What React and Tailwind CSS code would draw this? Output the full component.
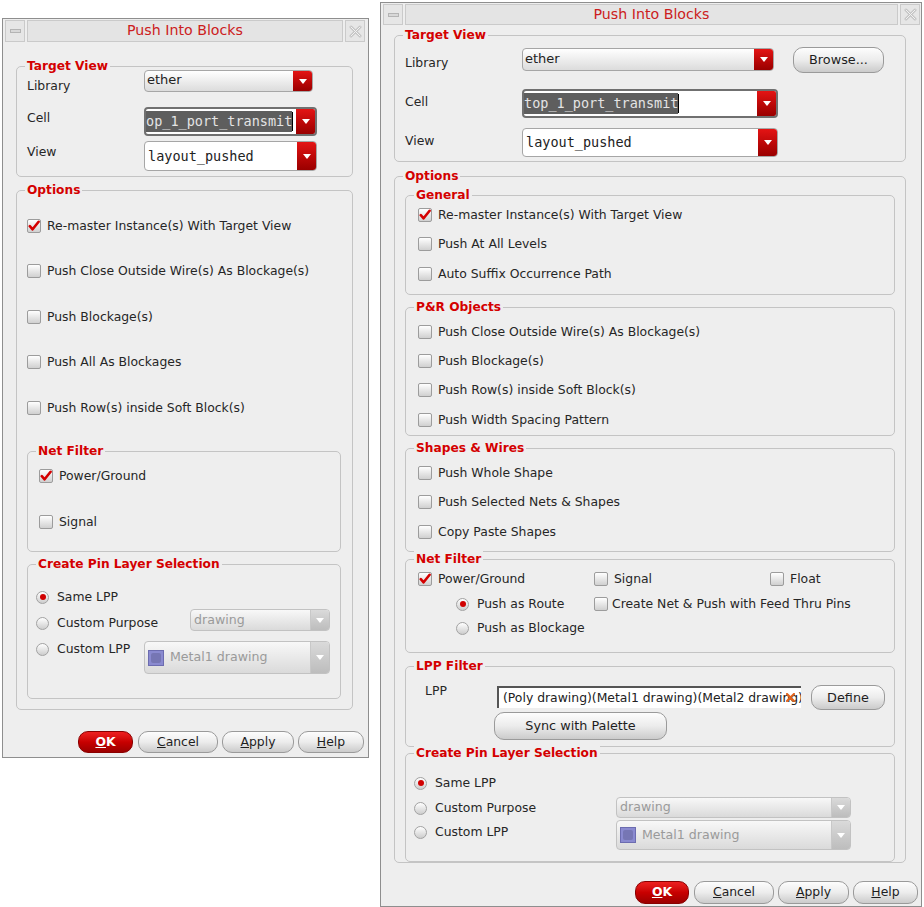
import React from 'react';

const Check = ({ checked }) => (
  <span className="w-[14px] h-[14px] shrink-0 rounded-[2px] border border-[#9c9c9c] bg-linear-to-b from-white to-[#d0d0d0] flex items-center justify-center">
    {checked && (
      <svg width="12" height="12" viewBox="0 0 12 12">
        <path d="M1.8 6.2 L4.6 9.3 L10.6 1.8" fill="none" stroke="#d40000" strokeWidth="2.6" strokeLinecap="round" strokeLinejoin="round" />
      </svg>
    )}
  </span>
);

const Radio = ({ checked }) => (
  <span className="w-[13px] h-[13px] shrink-0 rounded-full border border-[#a2a2a2] bg-linear-to-b from-white to-[#cdcdcd] flex items-center justify-center">
    {checked && <span className="w-[6px] h-[6px] rounded-full bg-[#d00000]" />}
  </span>
);

const CheckRow = ({ checked, label, className }) => (
  <div className={`flex items-center h-[20px] ${className}`}>
    <Check checked={checked} />
    <span className="ml-[6px] text-[12.4px] text-[#262626] whitespace-nowrap">{label}</span>
  </div>
);

const RadioRow = ({ checked, label, className }) => (
  <div className={`flex items-center h-[16px] ${className}`}>
    <Radio checked={checked} />
    <span className="ml-[8px] text-[12.4px] text-[#262626] whitespace-nowrap">{label}</span>
  </div>
);

const Group = ({ label, className, children }) => (
  <div className={`border border-[#c4c4c4] rounded-[5px] shrink-0 ${className}`}>
    <div className="-mt-[9px] ml-[8px] w-fit px-[2px] h-[16px] leading-[16px] bg-[#eeeeee] text-[12.2px] font-bold text-[#d40000] whitespace-nowrap">
      {label}
    </div>
    {children}
  </div>
);

const Arrow = ({ disabled }) => (
  <div
    className={
      disabled
        ? 'w-[19px] shrink-0 flex items-center justify-center border-l border-[#c8c8c8] bg-linear-to-b from-[#dadada] to-[#bdbdbd]'
        : 'w-[19px] shrink-0 flex items-center justify-center bg-linear-to-b from-[#e41414] to-[#9a0000]'
    }
  >
    <svg width="8" height="5" viewBox="0 0 8 5">
      <path d="M0 0 H8 L4 5 Z" fill="#ffffff" />
    </svg>
  </div>
);

const LibraryCombo = ({ className }) => (
  <div className={`flex rounded-[4px] border border-[#a6a6a6] overflow-hidden bg-linear-to-b from-white to-[#dcdcdc] ${className}`}>
    <div className="flex-1 pl-[2px] flex items-center text-[13px] text-[#222] -mt-[2px]">ether</div>
    <Arrow />
  </div>
);

const CellCombo = ({ className, text }) => (
  <div className={`flex rounded-[4px] border-2 border-[#707070] overflow-hidden bg-white ${className}`}>
    <div className="flex-1 flex items-center overflow-hidden">
      <span className="bg-[#5e5e5e] text-[#e4e4e4] font-['DejaVu_Sans_Mono',monospace] text-[13.5px] leading-[21px] h-[21px] whitespace-nowrap">
        {text}
      </span>
      <span className="w-[1px] h-[19px] bg-black shrink-0" />
    </div>
    <Arrow />
  </div>
);

const ViewCombo = ({ className }) => (
  <div className={`flex rounded-[4px] border border-[#a6a6a6] overflow-hidden bg-white ${className}`}>
    <div className="flex-1 pl-[3px] flex items-center font-['DejaVu_Sans_Mono',monospace] text-[13.5px] text-[#222]">layout_pushed</div>
    <Arrow />
  </div>
);

const DisabledCombo = ({ className, metal }) => (
  <div className={`flex rounded-[4px] border border-[#c2c2c2] overflow-hidden bg-linear-to-b from-[#f8f8f8] to-[#dadada] ${className}`}>
    <div className="flex-1 flex items-center pl-[3px] text-[12.6px] text-[#9a9a9a] whitespace-nowrap">
      {metal && (
        <span className="w-[16px] h-[16px] mr-[6px] shrink-0 bg-[#8a8ad0] border border-[#6c6cb0] flex items-center justify-center">
          <span className="w-[10px] h-[10px] rounded-[2px] bg-[#7676b4]" />
        </span>
      )}
      {metal ? 'Metal1 drawing' : 'drawing'}
    </div>
    <Arrow disabled />
  </div>
);

const Btn = ({ className, children }) => (
  <div className={`shrink-0 flex items-center justify-center rounded-[10px] border border-[#9a9a9a] bg-linear-to-b from-[#fdfdfd] via-[#ececec] to-[#cbcbcb] text-[12.4px] text-[#1e1e1e] ${className}`}>
    {children}
  </div>
);

const OkBtn = ({ className }) => (
  <div className={`shrink-0 flex items-center justify-center rounded-[10px] border border-[#8a0000] bg-linear-to-b from-[#ee2020] via-[#c80000] to-[#9c0000] text-[12.4px] font-bold text-white ${className}`}>
    <span className="underline">O</span>K
  </div>
);

const DialogButtons = ({ className, w }) => (
  <div className={`flex justify-end ${className}`}>
    <OkBtn className={w[0]} />
    <Btn className={`ml-[5px] ${w[1]}`}><span className="underline">C</span>ancel</Btn>
    <Btn className={`ml-[4px] ${w[2]}`}><span className="underline">A</span>pply</Btn>
    <Btn className={`ml-[4px] ${w[3]}`}><span className="underline">H</span>elp</Btn>
  </div>
);

const TitleBar = ({ className }) => (
  <div className={`flex gap-[2px] shrink-0 ${className}`}>
    <div className="w-[20px] border border-[#cacaca] bg-[#e6e6e6] flex items-center justify-center">
      <span className="w-[11px] h-[4px] border border-[#b4b4b4] bg-[#d8d8d8]" />
    </div>
    <div className="flex-1 border border-[#cacaca] bg-[#e4e4e4] flex items-center justify-center text-[14.2px] text-[#cc2020]">
      Push Into Blocks
    </div>
    <div className="w-[20px] border border-[#cacaca] bg-[#e6e6e6] flex items-center justify-center">
      <svg width="13" height="13" viewBox="0 0 13 13">
        <path d="M2 2 L11 11 M11 2 L2 11" stroke="#c4c4c4" strokeWidth="3" strokeLinecap="round" />
        <path d="M2 2 L11 11 M11 2 L2 11" stroke="#f2f2f2" strokeWidth="1" strokeLinecap="round" />
      </svg>
    </div>
  </div>
);

const FieldLabel = ({ className, children }) => (
  <div className={`w-[127px] pl-[10px] text-[12.4px] leading-[16px] text-[#262626] ${className}`}>{children}</div>
);

const SmallDialog = () => (
  <div className="ml-[2px] mt-[18px] w-[367px] h-[740px] shrink-0 border border-[#8e8e8e] bg-[#eeeeee] flex flex-col">
    <TitleBar className="h-[22px] mt-[1px] ml-[2px] mr-[3px]" />

    <Group label="Target View" className="mt-[24px] ml-[13px] w-[337px] h-[111px]">
      <div className="flex items-start h-[22px] -mt-[4px]">
        <FieldLabel className="mt-[8px]">Library</FieldLabel>
        <LibraryCombo className="w-[169px] h-[22px]" />
      </div>
      <div className="flex items-start mt-[15px]">
        <FieldLabel className="mt-[3px]">Cell</FieldLabel>
        <CellCombo className="w-[173px] h-[29px]" text="op_1_port_transmit" />
      </div>
      <div className="flex items-start mt-[5px]">
        <FieldLabel className="mt-[3px]">View</FieldLabel>
        <ViewCombo className="w-[173px] h-[30px]" />
      </div>
    </Group>

    <Group label="Options" className="mt-[13px] ml-[13px] w-[337px] h-[520px] flex flex-col">
      <CheckRow checked label="Re-master Instance(s) With Target View" className="ml-[10px] mt-[18px]" />
      <CheckRow label="Push Close Outside Wire(s) As Blockage(s)" className="ml-[10px] mt-[25px]" />
      <CheckRow label="Push Blockage(s)" className="ml-[10px] mt-[26px]" />
      <CheckRow label="Push All As Blockages" className="ml-[10px] mt-[25px]" />
      <CheckRow label="Push Row(s) inside Soft Block(s)" className="ml-[10px] mt-[26px]" />

      <Group label="Net Filter" className="mt-[33px] ml-[10px] w-[314px] h-[101px]">
        <CheckRow checked label="Power/Ground" className="ml-[11px] mt-[7px]" />
        <CheckRow label="Signal" className="ml-[11px] mt-[26px]" />
      </Group>

      <Group label="Create Pin Layer Selection" className="mt-[12px] ml-[10px] w-[314px] h-[135px]">
        <div className="flex items-center h-[20px] mt-[15px] ml-[8px]">
          <RadioRow checked label="Same LPP" />
        </div>
        <div className="flex items-start h-[22px] mt-[2px] ml-[8px]">
          <RadioRow label="Custom Purpose" className="w-[154px] mt-[6px]" />
          <DisabledCombo className="w-[140px] h-[22px]" />
        </div>
        <div className="flex items-start mt-[10px] ml-[8px]">
          <RadioRow label="Custom LPP" className="w-[108px]" />
          <DisabledCombo metal className="w-[186px] h-[33px]" />
        </div>
      </Group>
    </Group>

    <DialogButtons className="mt-[21px] mr-[4px] h-[22px]" w={['w-[55px]', 'w-[80px]', 'w-[72px]', 'w-[66px]']} />
  </div>
);

const BigDialog = () => (
  <div className="ml-[11px] mt-[2px] w-[542px] h-[905px] shrink-0 border border-[#8e8e8e] bg-[#eeeeee] flex flex-col">
    <TitleBar className="h-[21px] mt-[1px] ml-[2px] mr-[1px]" />

    <Group label="Target View" className="mt-[10px] ml-[13px] w-[512px] h-[127px]">
      <div className="flex items-start h-[26px] mt-[4px]">
        <FieldLabel className="mt-[8px]">Library</FieldLabel>
        <LibraryCombo className="w-[252px] h-[23px] mt-[1px]" />
        <Btn className="ml-[19px] w-[91px] h-[26px] text-[12.8px]">Browse...</Btn>
      </div>
      <div className="flex items-start mt-[16px]">
        <FieldLabel className="mt-[5px]">Cell</FieldLabel>
        <CellCombo className="w-[256px] h-[29px]" text="top_1_port_transmit" />
      </div>
      <div className="flex items-start mt-[10px]">
        <FieldLabel className="mt-[5px]">View</FieldLabel>
        <ViewCombo className="w-[256px] h-[29px]" />
      </div>
    </Group>

    <Group label="Options" className="mt-[14px] ml-[13px] w-[512px] h-[687px] flex flex-col">
      <Group label="General" className="mt-[11px] ml-[10px] w-[490px] h-[100px]">
        <CheckRow checked label="Re-master Instance(s) With Target View" className="ml-[12px] mt-[2px]" />
        <CheckRow label="Push At All Levels" className="ml-[12px] mt-[9px]" />
        <CheckRow label="Auto Suffix Occurrence Path" className="ml-[12px] mt-[10px]" />
      </Group>

      <Group label="P&R Objects" className="mt-[12px] ml-[10px] w-[490px] h-[129px]">
        <CheckRow label="Push Close Outside Wire(s) As Blockage(s)" className="ml-[12px] mt-[7px]" />
        <CheckRow label="Push Blockage(s)" className="ml-[12px] mt-[9px]" />
        <CheckRow label="Push Row(s) inside Soft Block(s)" className="ml-[12px] mt-[9px]" />
        <CheckRow label="Push Width Spacing Pattern" className="ml-[12px] mt-[10px]" />
      </Group>

      <Group label="Shapes & Wires" className="mt-[12px] ml-[10px] w-[490px] h-[104px]">
        <CheckRow label="Push Whole Shape" className="ml-[12px] mt-[7px]" />
        <CheckRow label="Push Selected Nets & Shapes" className="ml-[12px] mt-[9px]" />
        <CheckRow label="Copy Paste Shapes" className="ml-[12px] mt-[10px]" />
      </Group>

      <Group label="Net Filter" className="mt-[7px] ml-[10px] w-[490px] h-[94px]">
        <div className="flex ml-[12px] mt-[2px]">
          <CheckRow checked label="Power/Ground" className="w-[176px]" />
          <CheckRow label="Signal" className="w-[176px]" />
          <CheckRow label="Float" />
        </div>
        <div className="flex items-center ml-[50px] mt-[5px] h-[20px]">
          <RadioRow checked label="Push as Route" className="w-[138px]" />
          <div className="flex items-center">
            <Check />
            <span className="ml-[4px] text-[12.4px] text-[#262626] whitespace-nowrap">Create Net &amp; Push with Feed Thru Pins</span>
          </div>
        </div>
        <div className="flex items-center ml-[50px] mt-[4px] h-[20px]">
          <RadioRow label="Push as Blockage" />
        </div>
      </Group>

      <Group label="LPP Filter" className="mt-[13px] ml-[10px] w-[490px] h-[81px]">
        <div className="flex items-start mt-[9px]">
          <div className="w-[91px] pl-[19px] text-[12.4px] leading-[16px] text-[#262626]">LPP</div>
          <div className="relative w-[304px] h-[22px] mt-[3px] bg-white border-t-2 border-l-2 border-[#555555] flex items-center overflow-hidden">
            <span className="pl-[4px] text-[12.4px] text-[#222] whitespace-nowrap">(Poly drawing)(Metal1 drawing)(Metal2 drawing)</span>
            <svg className="absolute right-[6px] top-[5px]" width="9" height="9" viewBox="0 0 9 9">
              <path d="M1 1 L8 8 M8 1 L1 8" stroke="#e0641e" strokeWidth="2.2" strokeLinecap="round" />
            </svg>
          </div>
          <Btn className="ml-[10px] mt-[2px] w-[74px] h-[25px] text-[12.8px]">Define</Btn>
        </div>
        <Btn className="ml-[88px] mt-[2px] w-[173px] h-[28px] text-[12.8px]">Sync with Palette</Btn>
      </Group>

      <Group label="Create Pin Layer Selection" className="mt-[6px] ml-[10px] w-[490px] h-[109px]">
        <div className="flex items-center h-[20px] mt-[12px] ml-[8px]">
          <RadioRow checked label="Same LPP" />
        </div>
        <div className="flex items-start mt-[4px] ml-[8px]">
          <RadioRow label="Custom Purpose" className="w-[202px] mt-[3px]" />
          <DisabledCombo className="w-[235px] h-[21px]" />
        </div>
        <div className="flex items-start mt-[2px] ml-[8px]">
          <RadioRow label="Custom LPP" className="w-[202px] mt-[4px]" />
          <DisabledCombo metal className="w-[235px] h-[30px]" />
        </div>
      </Group>
    </Group>

    <DialogButtons className="mt-[18px] mr-[3px] h-[23px]" w={['w-[54px]', 'w-[80px]', 'w-[71px]', 'w-[65px]']} />
  </div>
);

export default function App() {
  return (
    <div className="w-[924px] h-[907px] overflow-hidden bg-white flex items-start font-['DejaVu_Sans',sans-serif]">
      <SmallDialog />
      <BigDialog />
    </div>
  );
}
